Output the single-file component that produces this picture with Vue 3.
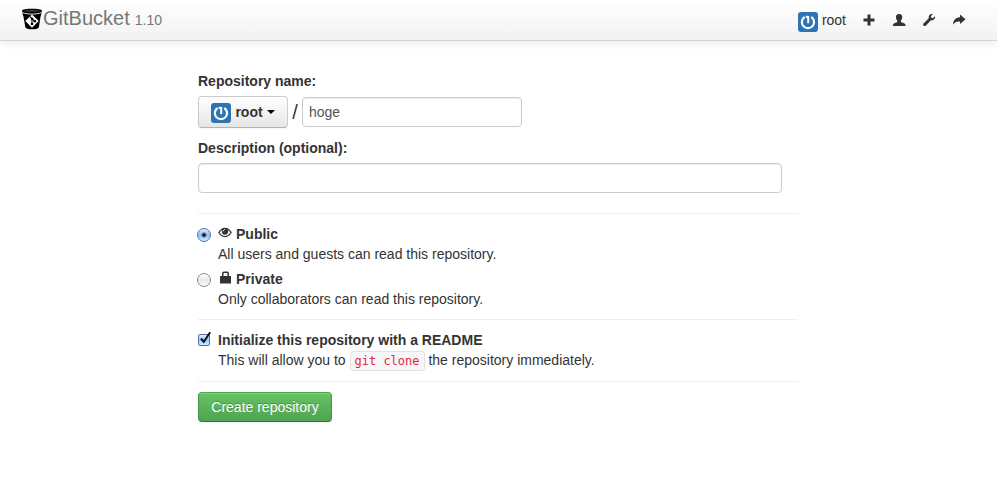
<script setup>
import { ref, h } from 'vue'

const owner = ref('root')
const name = ref('hoge')
const description = ref('')
const visibility = ref('public')
const readme = ref(true)

const Avatar = () =>
  h('svg', { viewBox: '0 0 20 20', width: 20, height: 20, 'aria-hidden': 'true' }, [
    h('rect', { width: 20, height: 20, rx: 3, fill: '#2d74b5' }),
    h('path', {
      d: 'M6.6 5A6.100 6.100 0 1 0 13.300 5',
      fill: 'none',
      stroke: '#fff',
      'stroke-width': 2.2
    }),
    h('path', { d: 'M7.800 3.800L11.200 4V11.200H9.200V5.800L7.600 6Z', fill: '#fff' })
  ])
</script>

<template>
  <header class="navbar">
    <a class="brand" href="#">
      <svg class="logo" viewBox="0 0 20 22" width="20" height="22" aria-hidden="true">
        <path d="M0 2.6C0 0 20 0 20 2.6L19 7.6C15 9 5 9 1 7.6Z" fill="#000" />
        <path d="M1.2 7L3.4 19.4C5 22 15 22 16.8 19.4L18.8 7Z" fill="#000" />
        <path d="M1.8 2.9C5 1.4 15 1.4 18.2 2.9C15 4.2 5 4.2 1.8 2.9Z" fill="#333" />
        <path d="M.7 4.6C5 6.6 15 6.6 19.3 4.6" fill="none" stroke="#fff" stroke-width=".9" />
        <path d="M10 6.5L16.7 13.1L10 19.7L3.3 13.1Z" fill="#fff" />
        <path d="M8 8.7L13 13.5M10 10.7V16.5" fill="none" stroke="#000" stroke-width="1.1" />
        <circle cx="10" cy="10.7" r="1.2" />
        <circle cx="10" cy="16" r="1.3" />
        <circle cx="12.9" cy="13.3" r="1.3" />
      </svg>
      <span class="title">GitBucket</span>
      <span class="version">1.10</span>
    </a>
    <nav class="menu">
      <a class="user" href="#"><Avatar /><span>root</span></a>
      <a href="#" aria-label="New repository">
        <svg viewBox="0 0 14 14" width="14" height="14"><path d="M5.500 1.500h3v4h4v3h-4v4h-3v-4h-4v-3h4z" /></svg>
      </a>
      <a href="#" aria-label="Account">
        <svg viewBox="0 0 14 14" width="14" height="14"><path d="M7 1C9.300 1 10.300 2.200 10.200 4.300C10.200 6 9.500 7 8.900 7.800V9.100L12 10.200C13.300 10.700 13.500 11.500 13.500 13H1C1 11.500 1 10.700 2.300 10.200L5.300 9.100V7.800C4.600 7 4 6 4 4.300C3.900 2.200 5 1 7 1Z" /></svg>
      </a>
      <a href="#" aria-label="Settings">
        <svg viewBox="0 0 14 14" width="14" height="14"><path d="M13 3.200C13.700 5.600 11.500 7.900 8.900 7.200L4 12.400C2.300 14 .2 12.100 1.500 10.400L6.800 5.300C6.100 2.500 8.400.4 10.900 1.100L8.900 3.300L9.300 4.800L10.800 5.200Z" /></svg>
      </a>
      <a href="#" aria-label="Sign out">
        <svg viewBox="0 0 14 14" width="14" height="14"><path d="M8 1.500L13.500 6.300L8 11V8.500C4.600 8.200 2.600 9 1.200 11.800C.8 7.400 3.800 4.300 8 4.200Z" /></svg>
      </a>
    </nav>
  </header>

  <main class="page">
    <form @submit.prevent>
      <fieldset>
        <label class="strong" for="name">Repository name:</label>
        <div class="name-row">
          <button class="btn owner" type="button" aria-haspopup="true">
            <Avatar /><span>{{ owner }}</span><i class="caret"></i>
          </button>
          <span class="slash">/</span>
          <input id="name" v-model="name" class="text name" type="text" />
        </div>
        <label class="strong" for="description">Description (optional):</label>
        <input id="description" v-model="description" class="text description" type="text" />
      </fieldset>

      <fieldset class="ruled">
        <label class="choice">
          <input v-model="visibility" class="radio" type="radio" name="visibility" value="public" />
          <span class="choice-body">
            <span class="choice-title">
              <svg viewBox="0 0 14 14" width="14" height="14" aria-hidden="true">
                <path
                  fill-rule="evenodd"
                  d="M7 1.800C3.900 1.800 1.700 3.900.2 6.500C1.700 9.200 3.900 11.200 7 11.200S12.300 9.200 13.800 6.500C12.300 3.900 10.100 1.800 7 1.800ZM7 10C4.800 10 3 8.800 1.700 6.500C2.300 5.500 3 4.700 3.800 4.100C3.300 7.200 4.800 8.800 7 8.800S10.700 7.200 10.200 4.100C11 4.700 11.700 5.500 12.300 6.500C11 8.800 9.200 10 7 10Z"
                />
                <path d="M5.200 5.400C5.200 4.300 6 3.500 7.100 3.500" fill="none" stroke="#fff" stroke-width="1" />
              </svg>
              <strong>Public</strong>
            </span>
            <span>All users and guests can read this repository.</span>
          </span>
        </label>
        <label class="choice">
          <input v-model="visibility" class="radio" type="radio" name="visibility" value="private" />
          <span class="choice-body">
            <span class="choice-title">
              <svg viewBox="0 0 14 14" width="14" height="14" aria-hidden="true">
                <path fill-rule="evenodd" d="M2 5H4V2.500Q4 .5 6 .5H9Q11 .5 11 2.500V5H13V12.500H2ZM5.500 5H9.500V3Q9.500 2 8.500 2H6.500Q5.500 2 5.500 3Z" />
              </svg>
              <strong>Private</strong>
            </span>
            <span>Only collaborators can read this repository.</span>
          </span>
        </label>
      </fieldset>

      <fieldset class="ruled readme">
        <label class="choice">
          <span class="check">
            <input v-model="readme" type="checkbox" />
            <svg v-if="readme" class="tick" viewBox="0 0 14 14" width="14" height="14" aria-hidden="true">
              <path d="M3 7.500L5.800 10.800L12.200 1.300" />
            </svg>
          </span>
          <span class="choice-body">
            <strong>Initialize this repository with a README</strong>
            <span>This will allow you to <code>git clone</code> the repository immediately.</span>
          </span>
        </label>
      </fieldset>

      <fieldset class="ruled">
        <button class="btn create" type="submit">Create repository</button>
      </fieldset>
    </form>
  </main>
</template>

<style>
body {
  background: #fff;
}
</style>

<style scoped>
.navbar,
.page {
  color: #333;
  font: 14px/20px "Liberation Sans", Arial, sans-serif;
}
svg {
  display: block;
  flex: none;
}
.navbar {
  display: flex;
  justify-content: space-between;
  box-sizing: border-box;
  height: 41px;
  padding: 0 31px 0 22px;
  border-bottom: 1px solid #d4d4d4;
  background: linear-gradient(#fff, #f2f2f2);
  box-shadow: 0 1px 10px rgba(0, 0, 0, 0.1);
}
.navbar a {
  color: #333;
  text-decoration: none;
}
.brand {
  display: flex;
  align-items: baseline;
  padding-top: 8px;
}
.logo {
  align-self: flex-start;
  margin-right: 1px;
}
.navbar .title {
  color: #777;
  font-size: 20px;
}
.navbar .version {
  margin-left: 5px;
  color: #777;
  font-size: 14px;
}
.menu {
  display: flex;
  align-items: center;
  gap: 16px;
}
.menu svg,
.choice-title svg {
  fill: #333;
}
.menu .user {
  display: flex;
  align-items: center;
  gap: 4px;
}
.user svg {
  margin-top: 3px;
}
.page {
  max-width: 600px;
  margin: 0 auto;
  padding: 30px 1px 30px 0;
}
fieldset {
  min-width: 0;
  margin: 0;
  padding: 0;
  border: 0;
}
.strong {
  display: block;
  font-weight: bold;
}
.name-row {
  display: flex;
  align-items: center;
  margin: 5px 0 10px;
}
.btn {
  box-sizing: border-box;
  border-radius: 4px;
  font: inherit;
  cursor: pointer;
}
.owner {
  display: flex;
  align-items: center;
  justify-content: center;
  gap: 4px;
  width: 90px;
  height: 32px;
  padding: 0;
  border: 1px solid #ccc;
  border-bottom-color: #b3b3b3;
  background: linear-gradient(#fff, #e6e6e6);
  box-shadow: inset 0 1px 0 #fff, 0 1px 2px rgba(0, 0, 0, 0.05);
  color: #333;
  font-weight: bold;
  text-shadow: 0 1px 1px rgba(255, 255, 255, 0.75);
}
.owner svg {
  margin-top: 2px;
}
.caret {
  border: 4px solid transparent;
  border-top-color: #000;
  border-bottom: 0;
}
.slash {
  width: 14px;
  font-size: 20px;
  text-align: center;
}
.text {
  box-sizing: border-box;
  height: 30px;
  padding: 4px 6px;
  border: 1px solid #ccc;
  border-radius: 4px;
  background: #fff;
  box-shadow: inset 0 1px 1px rgba(0, 0, 0, 0.075);
  color: #555;
  font: inherit;
}
.name {
  width: 220px;
}
.description {
  display: block;
  width: calc(100% - 16px);
  margin: 5px 0 20px;
}
.ruled {
  padding: 10px 0;
  border-top: 1px solid #eee;
}
.readme {
  padding-bottom: 11px;
}
.choice {
  display: flex;
  gap: 7px;
}
.choice + .choice {
  margin-top: 5px;
}
.choice-body {
  display: flex;
  flex-direction: column;
}
.choice-title {
  display: flex;
  gap: 4px;
}
.choice-title svg {
  margin-top: 2px;
}
.choice input {
  box-sizing: border-box;
  appearance: none;
  flex: none;
}
.radio {
  width: 14px;
  height: 14px;
  margin: 4px 0 0 -1px;
  border: 1px solid #8c8c8c;
  border-radius: 50%;
  background: linear-gradient(#fff, #e8e8e8 50%, #fafafa);
}
.radio:checked {
  border-color: #5a6ea8;
  background: radial-gradient(circle, #101830 1px, transparent 3px), linear-gradient(#e4effb, #8fbdf0 50%, #c9f0ff);
}
.check {
  position: relative;
  flex: none;
  width: 13px;
}
.check input {
  display: block;
  width: 12px;
  height: 12px;
  margin: 4px 0 0;
  border: 1px solid #8c8c8c;
  border-radius: 2px;
  background: #fff;
}
.check input:checked {
  border-color: #5a6ea8;
  background: linear-gradient(#e4effb, #9cc6f3 50%, #c9f0ff);
}
.tick {
  position: absolute;
  top: 1px;
  left: 0;
  fill: none;
  stroke: #081028;
  stroke-width: 2;
  pointer-events: none;
}
code {
  padding: 2px 4px;
  border: 1px solid #e1e1e8;
  border-radius: 3px;
  background: #f7f7f9;
  color: #dd2a3c;
  font: 12px "DejaVu Sans Mono", monospace;
}
.create {
  min-width: 134px;
  height: 30px;
  padding: 0 12px;
  border: 1px solid;
  border-color: #51a351 #489648 #387038;
  background: linear-gradient(#62c462, #51a351);
  box-shadow: inset 0 1px 0 rgba(255, 255, 255, 0.2), 0 1px 2px rgba(0, 0, 0, 0.05);
  color: #fff;
  text-shadow: 0 -1px 0 rgba(0, 0, 0, 0.25);
}
</style>
